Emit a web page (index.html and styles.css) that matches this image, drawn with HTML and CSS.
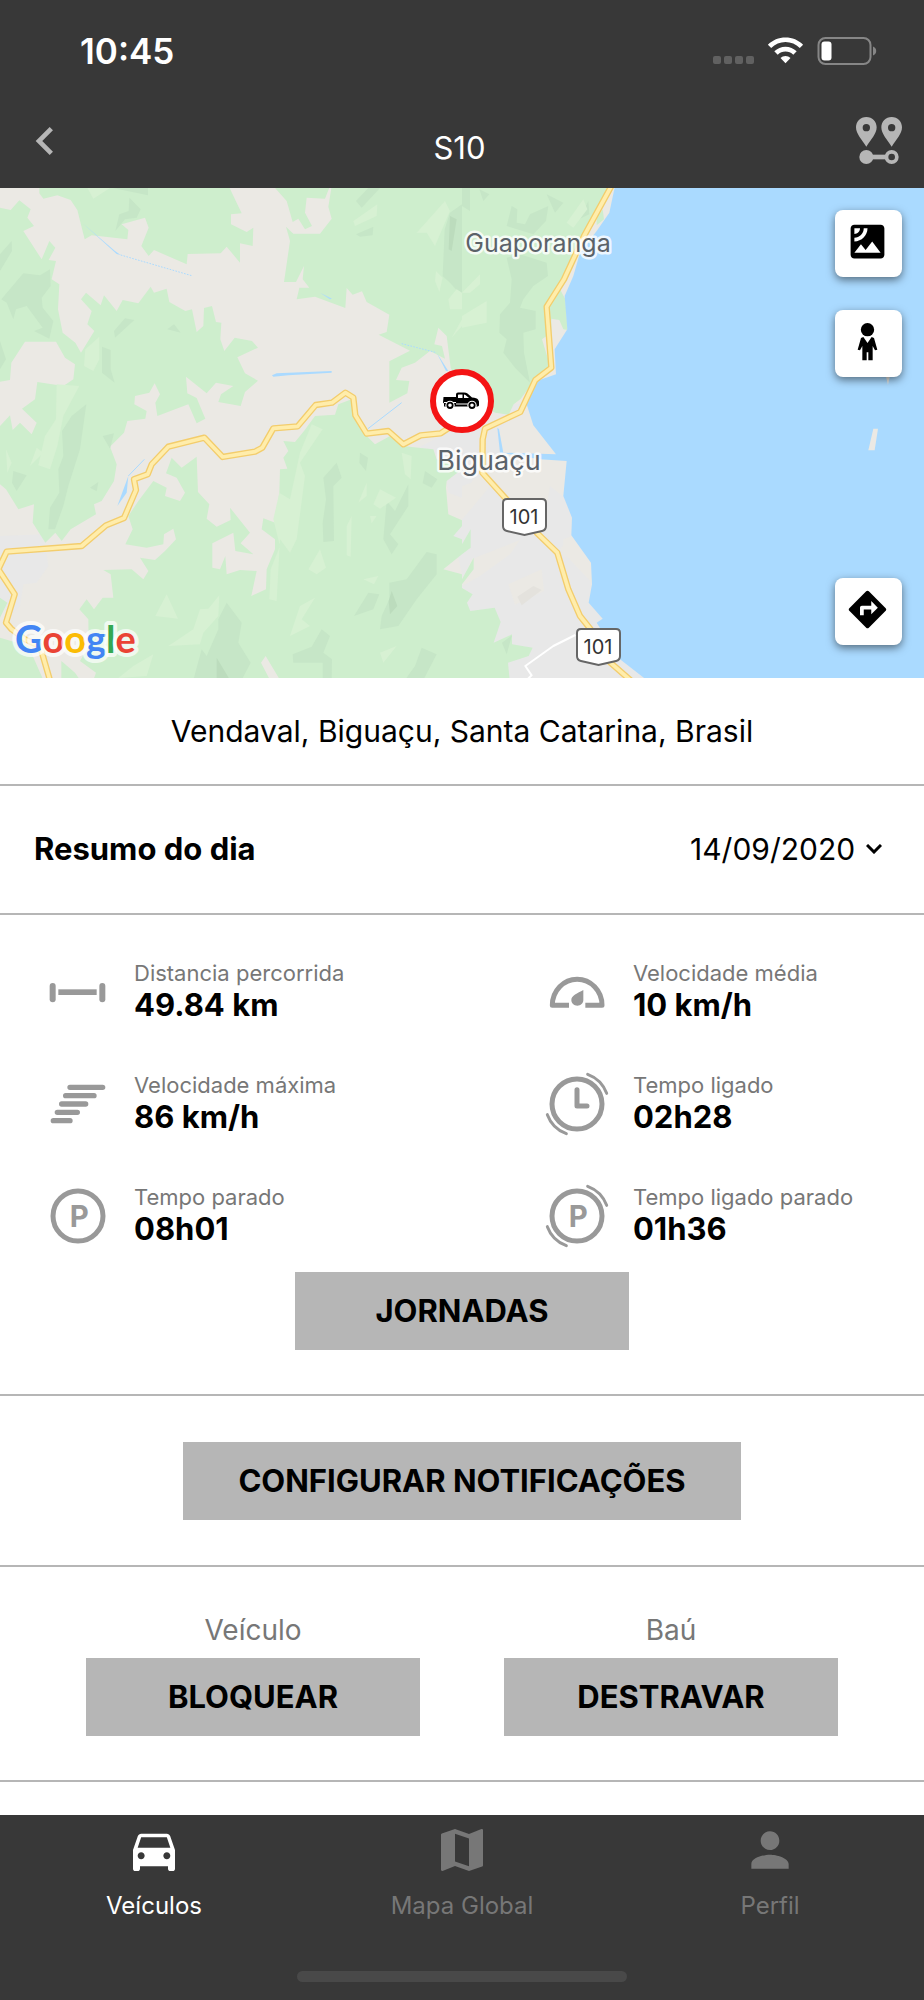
FILE: index.html
```html
<!DOCTYPE html>
<html lang="pt-BR">
<head>
    <meta charset="UTF-8">
    <meta name="viewport" content="width=device-width, initial-scale=1.0">
    <title>S10</title>
    <link rel="stylesheet" href="styles.css">
</head>
<body>
    <header class="header">
        <div class="status-bar">
            <span class="clock">10:45</span>
            <svg class="status-icons" viewBox="0 0 164 28" width="164" height="28">
                <g fill="#616161">
                    <rect x="0" y="19" width="8" height="8" rx="2"/>
                    <rect x="11" y="19" width="8" height="8" rx="2"/>
                    <rect x="22" y="19" width="8" height="8" rx="2"/>
                    <rect x="33" y="19" width="8" height="8" rx="2"/>
                </g>
                <g fill="#fff">
                    <path d="M72.500 0.500c6.700 0 13 2.600 17.600 7.200l-3.300 3.400c-3.800-3.800-8.900-6-14.300-6s-10.500 2.200-14.300 6l-3.300-3.400C59.500 3.100 65.800 0.500 72.500 0.500z"/>
                    <path d="M72.500 9.700c4.200 0 8.200 1.700 11.200 4.600l-3.400 3.500c-2.100-2-4.900-3.200-7.800-3.200s-5.700 1.200-7.800 3.200l-3.400-3.500c3-2.900 7-4.600 11.200-4.600z"/>
                    <path d="M72.500 18.900c1.900 0 3.700.8 5 2.100l-5 5.300-5-5.300c1.300-1.300 3.100-2.100 5-2.100z"/>
                </g>
                <rect x="105.500" y="1" width="52" height="26" rx="7" fill="none" stroke="#868686" stroke-width="2"/>
                <rect x="108.500" y="4.500" width="10" height="19" rx="3" fill="#fff"/>
                <path d="M160 9.500c2 .6 3.200 2.400 3.200 4.500s-1.200 3.900-3.200 4.500z" fill="#868686"/>
            </svg>
        </div>
        <nav class="nav">
            <button class="nav-btn" aria-label="Voltar">
                <svg viewBox="0 0 24 24" width="56" height="56" fill="#b6b6b6"><path d="M15.410 7.410L14 6l-6 6 6 6 1.410-1.410L10.830 12z"/></svg>
            </button>
            <h1 class="title">S10</h1>
            <button class="nav-btn nav-btn-route" aria-label="Rotas">
                <svg viewBox="0 0 138 141" width="46" height="47" fill="#b6b6b6">
                    <path fill-rule="evenodd" d="M31 0C13 0 0 14 0 31c0 20 17 36 31 58 14-22 31-38 31-58C62 14 49 0 31 0zm0 21a11 11 0 1 1 0 22 11 11 0 0 1 0-22z"/>
                    <path fill-rule="evenodd" d="M107 0C89 0 76 14 76 31c0 20 17 36 31 58 14-22 31-38 31-58 0-17-13-31-31-31zm0 21a11 11 0 1 1 0 22 11 11 0 0 1 0-22z"/>
                    <circle cx="31" cy="120" r="21"/>
                    <rect x="45" y="113" width="46" height="14"/>
                    <circle cx="107" cy="120" r="15.500" fill="none" stroke="#b6b6b6" stroke-width="11"/>
                </svg>
            </button>
        </nav>
    </header>

    <main>
        <section class="map">
            <svg class="map-canvas" viewBox="0 0 924 490" preserveAspectRatio="xMidYMid slice">
                <g transform="scale(.33333) translate(0 -6)">
                    <rect y="0" width="2772" height="1482" fill="#ebe9e4"/>
                    <!-- áreas urbanas -->
                    <g fill="#e8e8e8">
                        <path d="M0 1050L130 1045 145 1140 110 1190 70 1195 60 1260 30 1290 0 1240z"/>
                        <path d="M1255 785L1350 735 1460 720 1541 655 1580 655 1495 735 1500 800 1470 860 1420 880 1386 935 1345 920 1340 885 1386 850 1300 800z"/>
                        <path d="M1386 1000L1420 960 1470 900 1500 905 1560 985 1640 960 1650 900 1700 940 1716 995 1714 1048 1680 1090 1776 1190 1766 1250 1808 1298 1790 1310 1940 1482 1386 1482 1386 1165 1360 1050z"/>
                    </g>
                    <g fill="#ebe9e4">
                        <path d="M1414 1120L1560 1062 1530 1105 1440 1170 1386 1200z"/>
                        <path d="M1525 1195L1625 1150 1632 1215 1545 1256z"/>
                        <path d="M1386 900L1445 880 1470 900 1386 1000z"/>
                        <path d="M1690 1060L1716 1050 1768 1125 1690 1110z"/>
                    </g>
                    <path d="M1552 1232L1600 1200 1625 1212 1565 1258z" fill="#e4e2dd"/>
                    <!-- vegetação -->
                    <g fill="#ceeecd">
                        <path d="M0 65L32 72 58 43 92 70 82 95 102 120 70 135 125 220 148 165 166 185 146 222 168 225 155 280 178 295 174 370 188 440 226 470 243 500 283 435 262 415 275 375 243 340 258 320 302 358 312 328 350 375 368 342 415 352 452 302 462 320 500 308 508 348 556 375 576 370 590 438 610 420 612 366 636 360 648 408 664 410 661 460 673 495 704 455 756 465 774 485 712 514 735 562 774 584 735 618 722 660 655 648 663 625 700 600 648 590 620 622 558 572 562 622 590 636 616 698 590 712 565 655 472 690 466 650 480 625 464 592 448 620 405 630 403 655 440 675 436 698 382 705 372 740 330 782 350 835 342 885 305 945 282 955 288 985 212 1030 185 1065 166 1040 136 1070 98 1010 102 955 55 970 18 910 0 895V720L30 688 38 732 60 710 95 745 110 710 66 668 105 640 112 588 190 600 220 580 225 535 195 515 168 467H75L34 530 30 582 0 587z"/>
                        <path d="M118 22L130 38 172 28 212 42 232 72 254 160 275 148 382 160 385 132 365 115 435 95 446 125 424 180 446 210 462 192 560 235 563 204 662 202 680 182 720 230V172L758 180 760 125 740 138 693 115V85L725 82 686 0H118z"/>
                        <path d="M820 0L860 45 878 108 895 98 915 130 936 120 915 80 920 35 975 38 990 0z"/>
                        <path d="M995 0L985 62 995 98 960 143H880L858 122 870 165 852 288H888L912 240 908 280 928 305H898L890 340 945 332 1036 366 1040 306 1058 326 1086 316 1100 348 1168 386 1160 438 1136 446 1230 494 1168 526V650L1222 622 1228 585 1188 582 1205 545 1245 530 1290 495 1335 518 1326 480 1303 475 1315 425 1340 450 1352 545 1400 640 1486 680 1526 686 1541 655 1561 640 1606 580 1652 545 1626 460 1654 440V398L1678 402 1690 430 1703 432 1696 340 1680 310 1830 0z"/>
                        <path d="M515 815L545 845 590 812 594 918 628 955 620 998 650 1022 692 1002 690 965 750 1040 722 1072 760 1105 706 1095 700 1040 637 1072V1145L660 1150 676 1110 680 1165 720 1152 770 1155 754 1230 798 1210 800 1150 825 1090V1060L785 1030 790 997 826 1010 838 920 840 850 862 848 850 815 865 795 850 765 885 768 912 735 945 690 1005 686 1015 655 1055 640 1065 690 1098 748 1125 775 1180 745 1210 780 1255 785 1300 790 1310 820 1386 850 1340 885 1338 905 1345 985 1386 1003V1020L1360 1050 1386 1060V1105L1330 1150 1386 1165V1206L1418 1225 1401 1250 1411 1275 1484 1265 1502 1308 1481 1370 1536 1345V1375L1598 1385 1586 1410 1524 1430 1529 1482H840L797 1410 783 1430 810 1482H280L288 1460 240 1425 266 1380 265 1300 238 1270 260 1240 282 1270 308 1235H340L332 1165 310 1152 395 1150 430 1180 445 1155 420 1115 465 1122 495 1095 528 1060 520 1028 492 1045 490 1075 440 1085 376 1075 398 1030 385 990 415 945 460 885 500 905 495 930 540 945 555 920 530 875 498 862z"/>
                        <path d="M0 1355L85 1380 130 1482H0zM0 1235L22 1250 0 1295zM184 1425L225 1460 240 1482H184z"/>
                        <path d="M1386 1075L1412 1030V1085L1386 1105zM1421 1115V1150L1386 1195V1180z"/>
                        <path d="M1790 95L1808 70 1812 100 1790 118z"/>
                    </g>
                    <!-- relevo -->
                    <g fill="#c6e6c7">
                        <path d="M388 35L422 70 410 95 375 100 346 135 358 85 386 75zM338 6H444V28z"/>
                        <path d="M70 262L120 268 150 250 152 300 125 335 128 365 160 405 148 458 102 435 128 425 80 360 48 370 40 400 20 350 4 340z"/>
                        <path d="M35 165L36 195 0 255V205zM0 465L18 520 0 550zM375 397L403 402 345 455 342 435zM502 430L522 415 542 440z"/>
                        <path d="M306 482L332 492V550L344 590 306 560zM308 750L342 742 330 788zM40 855L80 868 50 915 36 890zM270 905L295 888 290 916z"/>
                        <path d="M215 690L259 655 240 790 205 900 190 960 165 1030 145 1030 150 965 178 920 175 850 190 810 186 735z"/>
                        <path d="M1068 45L1105 6H1140L1085 65zM1068 145L1120 122 1118 148 1080 152z"/>
                        <path d="M1350 80L1386 55V330L1350 290 1328 270 1334 130z"/>
                        <path d="M1386 6H1410V75L1386 60zM1438 10L1468 25 1450 45zM1535 60L1552 70 1550 110 1575 115 1590 85 1645 60 1638 105 1600 145 1520 120z"/>
                        <path d="M1520 215L1560 205 1640 230 1644 270 1600 300 1570 340 1560 365 1607 375V430L1570 440 1572 500 1590 590 1545 545 1510 500 1520 460 1498 440 1500 385 1530 350 1535 280z"/>
                        <path d="M1640 25L1690 50 1665 80zM1765 45L1768 85 1740 98z"/>
                        <path d="M970 875L1010 830 1025 875 1000 900 1002 1065 970 1068 968 1010 978 940z"/>
                        <path d="M1080 800L1104 815 1098 855 1078 830zM1160 945L1185 975 1225 895 1225 960 1170 1045 1195 1075 1175 1105 1150 1060zM1275 855L1312 880 1295 905 1268 892z"/>
                        <path d="M1280 1098L1310 1105V1165L1250 1240 1195 1320 1140 1330 1145 1290 1168 1240V1190L1220 1180zM1105 1220L1138 1225 1120 1270 1062 1290z"/>
                        <path d="M680 1250L725 1310 715 1370 752 1430 725 1482H580L605 1390 620 1410 655 1330 655 1300z"/>
                        <path d="M965 1330L990 1350 970 1400 996 1420 995 1482H968V1430L880 1430 878 1405 935 1382zM1265 1385L1310 1405 1270 1482H1215L1245 1440z"/>
                        <path d="M1506 1370L1536 1348 1520 1405z"/>
                    </g>
                    <g fill="#d7f1d3">
                        <path d="M298 452L298 520 280 555 252 540 256 490zM170 595L238 600 190 690 172 780 150 850 115 838 135 750 168 700z"/>
                        <path d="M18 790L35 830 22 860zM262 6H330L280 38zM110 785L130 800 90 840z"/>
                        <path d="M1060 105L1132 55 1130 90 1065 120zM1250 140L1335 45 1350 75 1305 180 1280 140zM1308 255L1328 275 1318 318 1305 285zM1345 340L1370 310 1386 320V370L1350 370zM1355 455L1386 400V420z"/>
                        <path d="M935 715L968 730 900 830 915 870 890 1060 870 1100 840 1060 830 1245 808 1240 812 1150 840 1080 820 1000 838 920 870 940 900 800z"/>
                        <path d="M1040 1020L1055 990 1052 1112 1040 1108zM1075 950L1100 890 1100 930zM1140 910L1188 935 1140 968 1120 955zM1110 990L1130 990 1115 1012zM1205 800L1235 810 1232 880 1215 865zM960 1090L978 1145 950 1165 925 1150zM1090 1180L1135 1170 1122 1195z"/>
                        <path d="M500 1225L534 1298 466 1290zM658 1228L655 1290 610 1340 600 1375 505 1380 580 1330 600 1270 625 1268zM945 1235L905 1300 930 1320 870 1350 900 1260zM1140 1400L1190 1380 1150 1430zM460 1405L440 1470 355 1476 400 1440z"/>
                        <path d="M1386 320L1440 265V295L1410 320zM1386 390L1460 345V410L1386 425zM1700 110L1750 40 1762 70 1720 125z"/>
                    </g>
                    <g fill="#bcdcbd">
                        <path d="M1350 90L1370 100 1355 195 1346 190zM1175 1215L1192 1260 1170 1285 1166 1245zM650 1415L690 1482H650z"/>
                    </g>
                    <!-- mar e rios -->
                    <g fill="#aadaff">
                        <path d="M1845 0L1828 80 1790 135 1740 200 1720 270 1694 330 1702 430 1664 490 1668 565 1610 585 1580 655 1600 718 1668 805 1510 800 1497 730 1492 725 1500 800 1620 820 1700 825 1690 930 1716 995 1714 1048 1773 1130 1776 1195 1766 1250 1808 1298 1790 1310 1860 1420 1940 1482H2772V0z"/>
                        <path d="M816 568L830 562 995 555V560L865 568 820 572zM352 960L385 870 380 920zM248 112L345 195 362 207 350 204zM960 320L996 338 990 340zM1310 500L1345 555H1338z"/>
                    </g>
                    <g fill="none" stroke="#aadaff" stroke-width="3">
                        <path d="M385 870L433 820M1104 728L1205 650"/>
                        <path d="M362 207L575 269M1205 473L1310 500" stroke-dasharray="5 4"/>
                    </g>
                    <path d="M2620 728H2634L2624 793H2605zM2655 560H2672L2664 596z" fill="#ebe9e4"/>
                    <!-- estradas -->
                    <g fill="none" stroke-linejoin="round">
                        <path d="M1726 1347L1660 1380 1576 1440 1595 1468 1580 1482" stroke="#fff" stroke-width="6"/>
                        <g stroke="#f3cd6c" stroke-width="19">
                            <path id="sc" d="M152 1490L120 1380 75 1360 35 1330 18 1310 44 1225 -5 1150 20 1097 245 1080 318 1018 372 996 408 912 402 880 443 865 455 835 505 782 613 755 668 813 765 797 787 785 820 727 893 721 947 657 996 650 1036 620 1060 635 1066 688 1100 743 1165 735 1210 775 1262 748 1322 742 1386 700"/>
                            <path id="br" d="M1837 -5L1752 150 1692 280 1640 362 1654 545 1606 582 1561 678 1455 728 1448 760 1447 860 1515 935 1610 1040 1672 1100 1705 1210 1740 1290 1780 1340 1820 1420 1900 1490"/>
                        </g>
                        <g stroke="#ffedab" stroke-width="11">
                            <use href="#sc"/>
                            <use href="#br"/>
                        </g>
                    </g>
                </g>

                <g class="place">
                    <text x="538" y="64" font-size="25">Guaporanga</text>
                    <text x="489" y="282" font-size="27">Biguaçu</text>
                </g>
                <g class="shield">
                    <path d="M507 311h35q4 0 4 4v23q0 4-4 5l-17.500 4-17.500-4q-4-1-4-5v-23q0-4 4-4z"/>
                    <text x="524" y="336">101</text>
                    <path d="M581 441h35q4 0 4 4v23q0 4-4 5l-17.500 4-17.500-4q-4-1-4-5v-23q0-4 4-4z"/>
                    <text x="598" y="466">101</text>
                </g>
                <text class="google" x="15" y="465"><tspan fill="#4285f4">G</tspan><tspan fill="#ea4335">o</tspan><tspan fill="#fbbc05">o</tspan><tspan fill="#4285f4">g</tspan><tspan fill="#34a853">l</tspan><tspan fill="#ea4335">e</tspan></text>

                <!-- veículo -->
                <circle cx="462" cy="213" r="29" fill="#fff" stroke="#f41414" stroke-width="6"/>
                <path fill-rule="evenodd" d="M443.500 209H456v-2.500q0-2 2-2h6q2 0 3.500 1l4.500 4q5 .5 6 2l1 2v4l-1 1H444v-3l-1-1zm14.500-2v3h4.500v-3.500H458.500zm6-.5v3.500h5l-3.500-3z"/>
                <path d="M444 214.500h12M456 216h12" stroke="#fff" stroke-width="1"/>
                <circle cx="450" cy="217.300" r="4.600" fill="#fff"/>
                <circle cx="472" cy="217.300" r="4.600" fill="#fff"/>
                <circle cx="450" cy="217.300" r="2.700" fill="#fff" stroke="#000" stroke-width="1.800"/>
                <circle cx="472" cy="217.300" r="2.700" fill="#fff" stroke="#000" stroke-width="1.800"/>
            </svg>
            <div class="map-controls">
                <button class="map-btn" aria-label="Satélite">
                    <svg viewBox="0 0 24 24" width="45" height="45"><path d="M19 3H5c-1.100 0-2 .9-2 2v14c0 1.100.9 2 2 2h14c1.100 0 2-.9 2-2V5c0-1.100-.9-2-2-2zM5 4.990h3C8 6.650 6.660 8 5 8V4.990zM5 12v-2c2.760 0 5-2.250 5-5.010h2C12 8.860 8.870 12 5 12zm0 6l3.500-4.500 2.500 3.010L14.500 12l4.500 6H5z"/></svg>
                </button>
                <button class="map-btn" aria-label="Street View">
                    <svg viewBox="0 0 135 135" width="45" height="45">
                        <circle cx="67.500" cy="32" r="20"/>
                        <path d="M55 54L67.500 72 80 54 87 57 97 92 90 94 83 81V124H70V100H65V124H52V81L45 94 38 92 48 57z"/>
                    </svg>
                </button>
                <button class="map-btn map-btn-route" aria-label="Traçar rota">
                    <svg viewBox="0 0 24 24" width="45" height="45"><path d="M21.710 11.290l-9-9c-.39-.39-1.020-.39-1.410 0l-9 9c-.39.39-.39 1.020 0 1.410l9 9c.39.39 1.020.39 1.410 0l9-9c.39-.38.39-1.010 0-1.410zM14 14.500V12h-4v3H8v-4c0-.55.45-1 1-1h5V7.500l3.500 3.500-3.500 3.500z"/></svg>
                </button>
            </div>
        </section>

        <section class="section address">
            <p>Vendaval, Biguaçu, Santa Catarina, Brasil</p>
        </section>

        <section class="section day">
            <label class="day-label" for="day">Resumo do dia</label>
            <div class="day-picker">
                <select class="day-select" id="day">
                    <option>14/09/2020</option>
                </select>
                <svg viewBox="0 0 16 10" width="16" height="10"><path d="M1 1l7 7 7-7" fill="none" stroke="#000" stroke-width="3"/></svg>
            </div>
        </section>

        <section class="section summary">
            <dl class="stats">
                <div class="stat">
                    <svg class="stat-icon" viewBox="0 0 192 192" fill="#999">
                        <rect x="11" y="69" width="18" height="58" rx="9"/>
                        <rect x="37" y="88" width="115" height="17"/>
                        <rect x="160" y="69" width="18" height="58" rx="9"/>
                    </svg>
                    <div>
                        <dt>Distancia percorrida</dt>
                        <dd>49.84 km</dd>
                    </div>
                </div>
                <div class="stat">
                    <svg class="stat-icon" viewBox="0 0 192 192">
                        <path d="M72 136H22C22 92 56 58 96.500 58S171 92 171 136H121" fill="none" stroke="#999" stroke-width="15" stroke-linejoin="round"/>
                        <path d="M115 90V120c0 10-8 17-18 17s-18-7-18-17c0-14 18-20 36-30z" fill="#999"/>
                    </svg>
                    <div>
                        <dt>Velocidade média</dt>
                        <dd>10 km/h</dd>
                    </div>
                </div>
                <div class="stat">
                    <svg class="stat-icon" viewBox="0 0 192 192">
                        <path d="M72 46H170M59 71H144M47 96H119M34 121H94M22 146H72" fill="none" stroke="#999" stroke-width="16" stroke-linecap="round"/>
                    </svg>
                    <div>
                        <dt>Velocidade máxima</dt>
                        <dd>86 km/h</dd>
                    </div>
                </div>
                <div class="stat">
                    <svg class="stat-icon" viewBox="0 0 192 192" fill="none" stroke="#999" stroke-linecap="round">
                        <circle cx="96" cy="96" r="75" stroke-width="15"/>
                        <path d="M96 53V102H126" stroke-width="15" stroke-linejoin="round"/>
                        <path d="M128 7A96 96 0 0 1 185 64M64 185A96 96 0 0 1 7 128" stroke-width="9"/>
                    </svg>
                    <div>
                        <dt>Tempo ligado</dt>
                        <dd>02h28</dd>
                    </div>
                </div>
                <div class="stat">
                    <svg class="stat-icon" viewBox="0 0 192 192">
                        <circle cx="96" cy="96" r="75" fill="none" stroke="#999" stroke-width="15"/>
                        <text class="stat-letter" x="100" y="128">P</text>
                    </svg>
                    <div>
                        <dt>Tempo parado</dt>
                        <dd>08h01</dd>
                    </div>
                </div>
                <div class="stat">
                    <svg class="stat-icon" viewBox="0 0 192 192">
                        <g fill="none" stroke="#999" stroke-linecap="round">
                            <circle cx="96" cy="96" r="75" stroke-width="15"/>
                            <path d="M128 7A96 96 0 0 1 185 64M64 185A96 96 0 0 1 7 128" stroke-width="9"/>
                        </g>
                        <text class="stat-letter" x="100" y="128">P</text>
                    </svg>
                    <div>
                        <dt>Tempo ligado parado</dt>
                        <dd>01h36</dd>
                    </div>
                </div>
            </dl>
            <button class="btn">JORNADAS</button>
        </section>

        <section class="section notifications">
            <button class="btn btn-wide">CONFIGURAR NOTIFICAÇÕES</button>
        </section>

        <section class="section actions">
            <div class="action">
                <p>Veículo</p>
                <button class="btn">BLOQUEAR</button>
            </div>
            <div class="action">
                <p>Baú</p>
                <button class="btn">DESTRAVAR</button>
            </div>
        </section>
    </main>

    <footer class="tab-bar">
        <nav class="tabs">
            <a href="#" class="tab active">
                <svg viewBox="0 0 24 24" width="56" height="56"><path d="M18.920 6.010C18.720 5.420 18.160 5 17.500 5h-11c-.66 0-1.210.42-1.420 1.010L3 12v8c0 .55.45 1 1 1h1c.55 0 1-.45 1-1v-1h12v1c0 .55.45 1 1 1h1c.55 0 1-.45 1-1v-8l-2.080-5.990zM6.500 16c-.83 0-1.500-.67-1.500-1.500S5.670 13 6.500 13s1.500.67 1.500 1.500S7.330 16 6.500 16zm11 0c-.83 0-1.500-.67-1.500-1.500s.67-1.500 1.500-1.500 1.500.67 1.500 1.500-.67 1.500-1.500 1.500zM5 11l1.500-4.500h11L19 11H5z"/></svg>
                Veículos
            </a>
            <a href="#" class="tab">
                <svg viewBox="0 0 24 24" width="56" height="56"><path d="M20.500 3l-.16.03L15 5.100 9 3 3.360 4.900c-.21.07-.36.25-.36.48V20.500c0 .28.22.5.5.5l.16-.03L9 18.900l6 2.100 5.640-1.900c.21-.07.36-.25.36-.48V3.500c0-.28-.22-.5-.5-.5zM15 19l-6-2.110V5l6 2.110V19z"/></svg>
                Mapa Global
            </a>
            <a href="#" class="tab">
                <svg viewBox="0 0 24 24" width="56" height="56"><path d="M12 12c2.210 0 4-1.790 4-4s-1.790-4-4-4-4 1.790-4 4 1.790 4 4 4zm0 2c-2.670 0-8 1.340-8 4v2h16v-2c0-2.660-5.330-4-8-4z"/></svg>
                Perfil
            </a>
        </nav>
        <div class="home-indicator"></div>
    </footer>
</body>
</html>
```
FILE: styles.css
```css
* {
    margin: 0;
    padding: 0;
    box-sizing: border-box;
    font-family: 'Inter', 'Liberation Sans', sans-serif;
}

body {
    min-height: 100vh;
    display: flex;
    flex-direction: column;
    background: #fff;
    color: #000;
    font-size: 30px;
    line-height: 36px;
}

button {
    border: none;
    background: none;
    cursor: pointer;
}

svg {
    display: block;
}

main {
    flex: 1;
}

/* Cabeçalho */
.header {
    background: #383838;
    color: white;
}

.status-bar {
    display: flex;
    justify-content: space-between;
    align-items: center;
    height: 100px;
    padding: 1px 47px 0 80px;
}

.clock {
    font-size: 35px;
    font-weight: 600;
}

.nav {
    display: flex;
    justify-content: space-between;
    align-items: center;
    height: 88px;
    padding: 0 22px 7px 17px;
}

.nav-btn {
    display: flex;
    width: 56px;
}

.nav-btn-route {
    justify-content: flex-end;
}

.title {
    padding-top: 14px;
    font-size: 31px;
    font-weight: 400;
}

/* Mapa */
.map {
    position: relative;
}

.map-canvas {
    width: 100%;
    height: 490px;
}

.map-controls {
    position: absolute;
    top: 22px;
    right: 22px;
    bottom: 33px;
    display: flex;
    flex-direction: column;
    gap: 33px;
}

.map-btn {
    display: flex;
    justify-content: center;
    align-items: center;
    width: 67px;
    height: 67px;
    padding: 0 2px 4px 0;
    background: white;
    border-radius: 8px;
    box-shadow: 0 3px 8px rgba(0, 0, 0, 0.5);
}

.map-btn-route {
    margin-top: auto;
}

.place {
    fill: #5b6269;
    stroke: rgba(255, 255, 255, 0.8);
    stroke-width: 5px;
    stroke-linejoin: round;
    paint-order: stroke;
    text-anchor: middle;
}

.shield path {
    fill: white;
    stroke: #666;
    stroke-width: 2px;
}

.shield text {
    fill: #333;
    font-size: 20px;
    text-anchor: middle;
}

.google {
    font-size: 38px;
    stroke: rgba(255, 255, 255, 0.7);
    stroke-width: 8px;
    stroke-linejoin: round;
    paint-order: stroke;
}

.google tspan {
    font-family: 'Lato', sans-serif;
    font-weight: 700;
}

/* Seções */
.section {
    border-bottom: 2px solid #b6b6b6;
}

.address {
    padding: 35px 24px;
    text-align: center;
}

.day {
    display: flex;
    justify-content: space-between;
    align-items: center;
    padding: 45px 42px 46px 34px;
}

.day-label {
    font-size: 31px;
    font-weight: 700;
}

.day-picker {
    display: flex;
    align-items: center;
    gap: 10px;
}

.day-select {
    appearance: none;
    border: none;
    background: none;
    color: #000;
    font-size: 30px;
    line-height: 36px;
}

.summary {
    padding: 45px 0 44px;
}

.stats {
    display: grid;
    grid-template-columns: 54% 46%;
    row-gap: 48px;
    margin-bottom: 24px;
}

.stat {
    display: flex;
    align-items: center;
    gap: 24px;
    padding-left: 46px;
}

.stat-icon {
    width: 64px;
    height: 64px;
}

.stat-letter {
    fill: #999;
    font-size: 88px;
    font-weight: 700;
    text-anchor: middle;
}

.stat dt {
    color: #777;
    font-size: 22px;
    line-height: 26px;
}

.stat dd {
    font-size: 31px;
    font-weight: 700;
    line-height: 38px;
}

.btn {
    display: block;
    width: 334px;
    height: 78px;
    margin: 0 auto;
    padding-bottom: 2px;
    background: #b6b6b6;
    color: #000;
    font-size: 31px;
    font-weight: 700;
}

.btn-wide {
    width: 558px;
}

.notifications {
    padding: 46px 0 45px;
}

.actions {
    display: flex;
    justify-content: center;
    gap: 84px;
    padding: 45px 0 44px;
}

.action p {
    margin-bottom: 10px;
    color: #777;
    font-size: 28px;
    text-align: center;
}

/* Barra inferior */
.tab-bar {
    padding: 7px 0 18px;
    background: #383838;
}

.tabs {
    display: flex;
}

.tab {
    flex: 1;
    display: flex;
    flex-direction: column;
    align-items: center;
    gap: 12px;
    color: #777;
    fill: #777;
    font-size: 24px;
    line-height: 32px;
    text-decoration: none;
}

.tab.active {
    color: white;
    fill: white;
}

.home-indicator {
    width: 330px;
    height: 11px;
    margin: 49px auto 0;
    background: #494949;
    border-radius: 6px;
}
```
